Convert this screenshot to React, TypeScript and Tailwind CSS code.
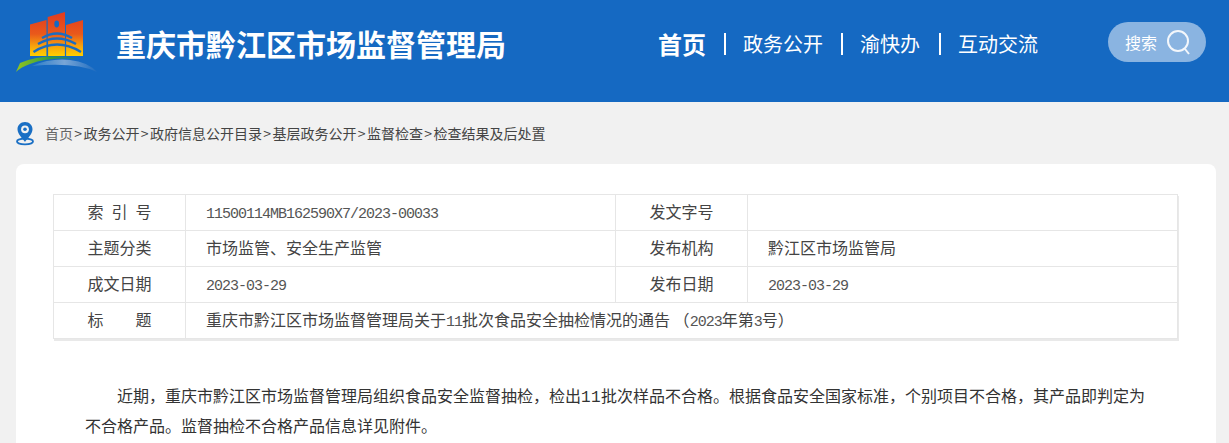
const cjk = "font-['Noto_Sans_CJK_SC','Noto_Sans',sans-serif]";

function Logo() {
  return (
    <svg width="84" height="64" viewBox="0 0 84 64" className="block">
      <defs>
        <linearGradient id="p" x1="0" y1="0" x2="0" y2="1">
          <stop offset="0" stopColor="#e03a20" />
          <stop offset="0.5" stopColor="#e9591b" />
          <stop offset="0.78" stopColor="#f8a40c" />
          <stop offset="1" stopColor="#ffcf00" />
        </linearGradient>
        <linearGradient id="g" x1="0" y1="0" x2="1" y2="0">
          <stop offset="0" stopColor="#94c61d" />
          <stop offset="0.55" stopColor="#2f9a45" />
          <stop offset="1" stopColor="#1a7a88" />
        </linearGradient>
        <linearGradient id="b" x1="0" y1="0" x2="1" y2="0">
          <stop offset="0" stopColor="#2a7cc8" />
          <stop offset="0.5" stopColor="#78a5d6" />
          <stop offset="1" stopColor="#1e6cc0" />
        </linearGradient>
      </defs>
      <g transform="translate(-15,-11)">
        <path d="M30 24.500 L46.500 20 V56 H30 Z M47.700 17 L65 12 V56 H47.700 Z M66 25 L83 20 V56 H66 Z" fill="url(#p)" />
        <ellipse cx="56.700" cy="24" rx="2.400" ry="3.400" fill="#1569c2" />
        <path d="M42 38 Q57 29 72 38 M38 44 Q57 33 76 44 M33.500 52 Q57 37 81 52" fill="none" stroke="#1c6cc0" strokeWidth="2.400" />
        <path d="M47.500 40 V56 M65.500 40 V56" stroke="#1c6cc0" strokeWidth="1.200" />
        <path d="M16 72 L20 63 Q46 52 79 59 Q48 57 30 64 Q21 67 16 72 Z" fill="url(#g)" />
        <path d="M32 66 Q50 58 70 60 Q88 62 97 72 Q76 62 32 66 Z" fill="url(#b)" />
      </g>
    </svg>
  );
}

function Pin() {
  return (
    <svg width="20" height="25" viewBox="0 0 20 25" className="block">
      <ellipse cx="10" cy="20.500" rx="8" ry="2.800" fill="none" stroke="#1a6fc4" strokeWidth="1.800" />
      <path d="M10 1 C5.500 1 2.500 4.400 2.500 8.300 C2.500 13 7.500 17.500 10 21 C12.500 17.500 17.500 13 17.500 8.300 C17.500 4.400 14.500 1 10 1 Z" fill="#1a6fc4" />
      <circle cx="10" cy="8.300" r="3.900" fill="#f1f1f1" />
      <circle cx="10" cy="8.300" r="1.800" fill="#1a6fc4" />
    </svg>
  );
}

function Mono({ children }: { children: React.ReactNode }) {
  return <span className="font-['Liberation_Mono',monospace] text-[15px] text-[#555] leading-none tracking-[-1px]">{children}</span>;
}

const Sep = () => <span className="w-[2px] h-[22px] bg-white ml-[18px] mr-[17px]" />;
const Gt = () => <span className="inline-block w-[10.5px] text-center">&gt;</span>;

function Label({ parts }: { parts: string[] }) {
  return (
    <td className="w-[132px] border border-[#e6e6e6] text-center text-[16px] text-[#444] p-0 pb-[4px]">
      {parts.length === 1 ? (
        parts[0]
      ) : (
        <span className="inline-flex w-[64px] justify-between">
          {parts.map((p) => (
            <span key={p}>{p}</span>
          ))}
        </span>
      )}
    </td>
  );
}

function Value({ children, span }: { children?: React.ReactNode; span?: number }) {
  return (
    <td colSpan={span} className="border border-[#e6e6e6] pl-[20px] pb-[4px] text-[16px] text-[#444] whitespace-nowrap">
      {children}
    </td>
  );
}

export default function App() {
  return (
    <div className={`h-[443px] overflow-hidden bg-[#f1f1f1] ${cjk}`}>
      <header className="h-[102px] bg-[#1569c2] flex items-start text-white">
        <div className="ml-[15px] mt-[11px]">
          <Logo />
        </div>
        <h1 className="ml-[17px] mt-[21px] text-[30px] leading-[45px] font-bold whitespace-nowrap">
          重庆市黔江区市场监督管理局
        </h1>
        <nav className="ml-[152px] mt-[22px] h-[44px] flex items-center whitespace-nowrap text-[20px]">
          <span className="text-[24px] font-bold">首页</span>
          <Sep />
          <span>政务公开</span>
          <Sep />
          <span className="mr-[1px]">渝快办</span>
          <Sep />
          <span>互动交流</span>
        </nav>
        <div className="ml-[70px] mt-[22px] w-[98px] h-[40px] rounded-[20px] bg-[#8ab4e1] flex items-center pl-[17px] gap-[9px]">
          <span className="text-[16px]">搜索</span>
          <svg width="26" height="26" viewBox="0 0 26 26" fill="none" stroke="#f4f7fb" strokeWidth="2">
            <circle cx="12" cy="12" r="10" />
            <path d="M19 20 L23 25" />
          </svg>
        </div>
      </header>

      <div className="h-[62px] pl-[15px] flex items-center gap-[10px] text-[14px] text-[#444]">
        <Pin />
        <div className="whitespace-nowrap">
          <span className="text-[#666]">首页</span>
          <Gt />
          政务公开
          <Gt />
          政府信息公开目录
          <Gt />
          基层政务公开
          <Gt />
          监督检查
          <Gt />
          检查结果及后处置
        </div>
      </div>

      <main className="mx-[16px] w-[1200px] bg-white rounded-[8px] pt-[30px] h-[400px]">
        <table className="ml-[37px] w-[1125px] table-fixed border-collapse border border-[#e6e6e6] shadow-[1px_2px_0_#e9e9e9]">
          <colgroup>
            <col className="w-[132px]" />
            <col className="w-[430px]" />
            <col className="w-[132px]" />
            <col />
          </colgroup>
          <tbody>
            <tr className="h-[36px]">
              <Label parts={["索", "引", "号"]} />
              <Value>
                <Mono>11500114MB162590X7/2023-00033</Mono>
              </Value>
              <Label parts={["发文字号"]} />
              <Value />
            </tr>
            <tr className="h-[36px]">
              <Label parts={["主题分类"]} />
              <Value>市场监管、安全生产监管</Value>
              <Label parts={["发布机构"]} />
              <Value>黔江区市场监管局</Value>
            </tr>
            <tr className="h-[36px]">
              <Label parts={["成文日期"]} />
              <Value>
                <Mono>2023-03-29</Mono>
              </Value>
              <Label parts={["发布日期"]} />
              <Value>
                <Mono>2023-03-29</Mono>
              </Value>
            </tr>
            <tr className="h-[36px]">
              <Label parts={["标", "题"]} />
              <Value span={3}>
                重庆市黔江区市场监督管理局关于<Mono>11</Mono>批次食品安全抽检情况的通告 （<Mono>2023</Mono>年第<Mono>3</Mono>号）
              </Value>
            </tr>
          </tbody>
        </table>

        <p className="mt-[41px] ml-[69px] w-[1064px] indent-[32px] text-[16px] leading-[30px] text-[#333]">
          近期，重庆市黔江区市场监督管理局组织食品安全监督抽检，检出<span className="font-['Liberation_Mono',monospace] leading-none tracking-[0.4px]">11</span>批次样品不合格。根据食品安全国家标准，个别项目不合格，其产品即判定为不合格产品。监督抽检不合格产品信息详见附件。
        </p>
      </main>
    </div>
  );
}
